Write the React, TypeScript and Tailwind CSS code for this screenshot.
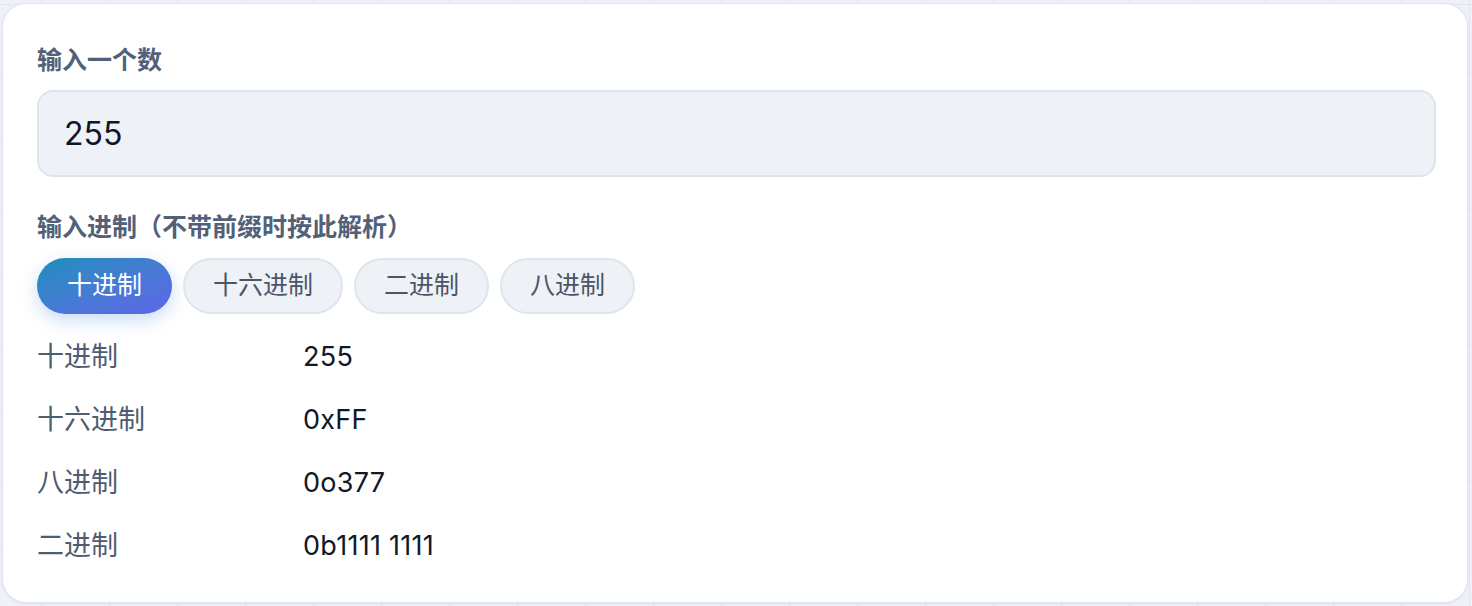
import React, { useState } from "react";

const bases = ["十进制", "十六进制", "二进制", "八进制"];

export default function App() {
  const [active, setActive] = useState("十进制");
  const rows = [
    ["十进制", "255"],
    ["十六进制", "0xFF"],
    ["八进制", "0o377"],
    ["二进制", "0b1111 1111"],
  ];
  return (
    <div
      className="flex h-[606px] w-full bg-[#eef1f8] bg-[image:linear-gradient(to_right,#e1e6f0_1px,transparent_1px),linear-gradient(to_bottom,#e1e6f0_1px,transparent_1px)] bg-[size:68px_68px] bg-[position:41px_4px] pb-[3px] pl-[2px] pr-[4px] pt-[3px]"
      style={{ fontFamily: '"Inter", "Noto Sans CJK SC", sans-serif' }}
    >
      <div className="flex flex-1 flex-col rounded-[24px] border border-[#dfe5f0] bg-white pl-[34px] pr-[31px] pt-[40px] shadow-[0_1px_3px_rgba(15,23,42,0.06)]">
        <div className="text-[25px] font-semibold leading-[32px] text-[#526078]">输入一个数</div>
        <div className="mt-[14px] flex h-[87px] items-center rounded-[16px] border-2 border-[#dde4ee] bg-[#eef1f6] pl-[25px] text-[32px] text-[#0f172a]">
          255
        </div>
        <div className="mt-[34px] text-[25px] font-semibold leading-[32px] text-[#526078]">
          输入进制（不带前缀时按此解析）
        </div>
        <div className="mt-[15px] flex gap-[11px]">
          {bases.map((b) =>
            b === active ? (
              <button
                key={b}
                onClick={() => setActive(b)}
                className="flex h-[56px] items-center rounded-full bg-gradient-to-br from-[#0f8fbb] to-[#5e63ea] px-[30px] text-[25px] text-white shadow-[0_6px_18px_rgba(56,130,220,0.28)]"
              >
                {b}
              </button>
            ) : (
              <button
                key={b}
                onClick={() => setActive(b)}
                className="flex h-[56px] items-center rounded-full border-2 border-[#dfe5ee] bg-[#eef1f6] px-[28px] text-[25px] text-[#4b5568]"
              >
                {b}
              </button>
            )
          )}
        </div>
        <div className="mt-[12px] flex flex-col">
          {rows.map(([k, v]) => (
            <div key={k} className="flex h-[63px] items-center text-[27px]">
              <div className="w-[266px] text-[#4f5b6e]">{k}</div>
              <div className="tracking-[0.01em] text-[#111827]">{v}</div>
            </div>
          ))}
        </div>
      </div>
    </div>
  );
}
